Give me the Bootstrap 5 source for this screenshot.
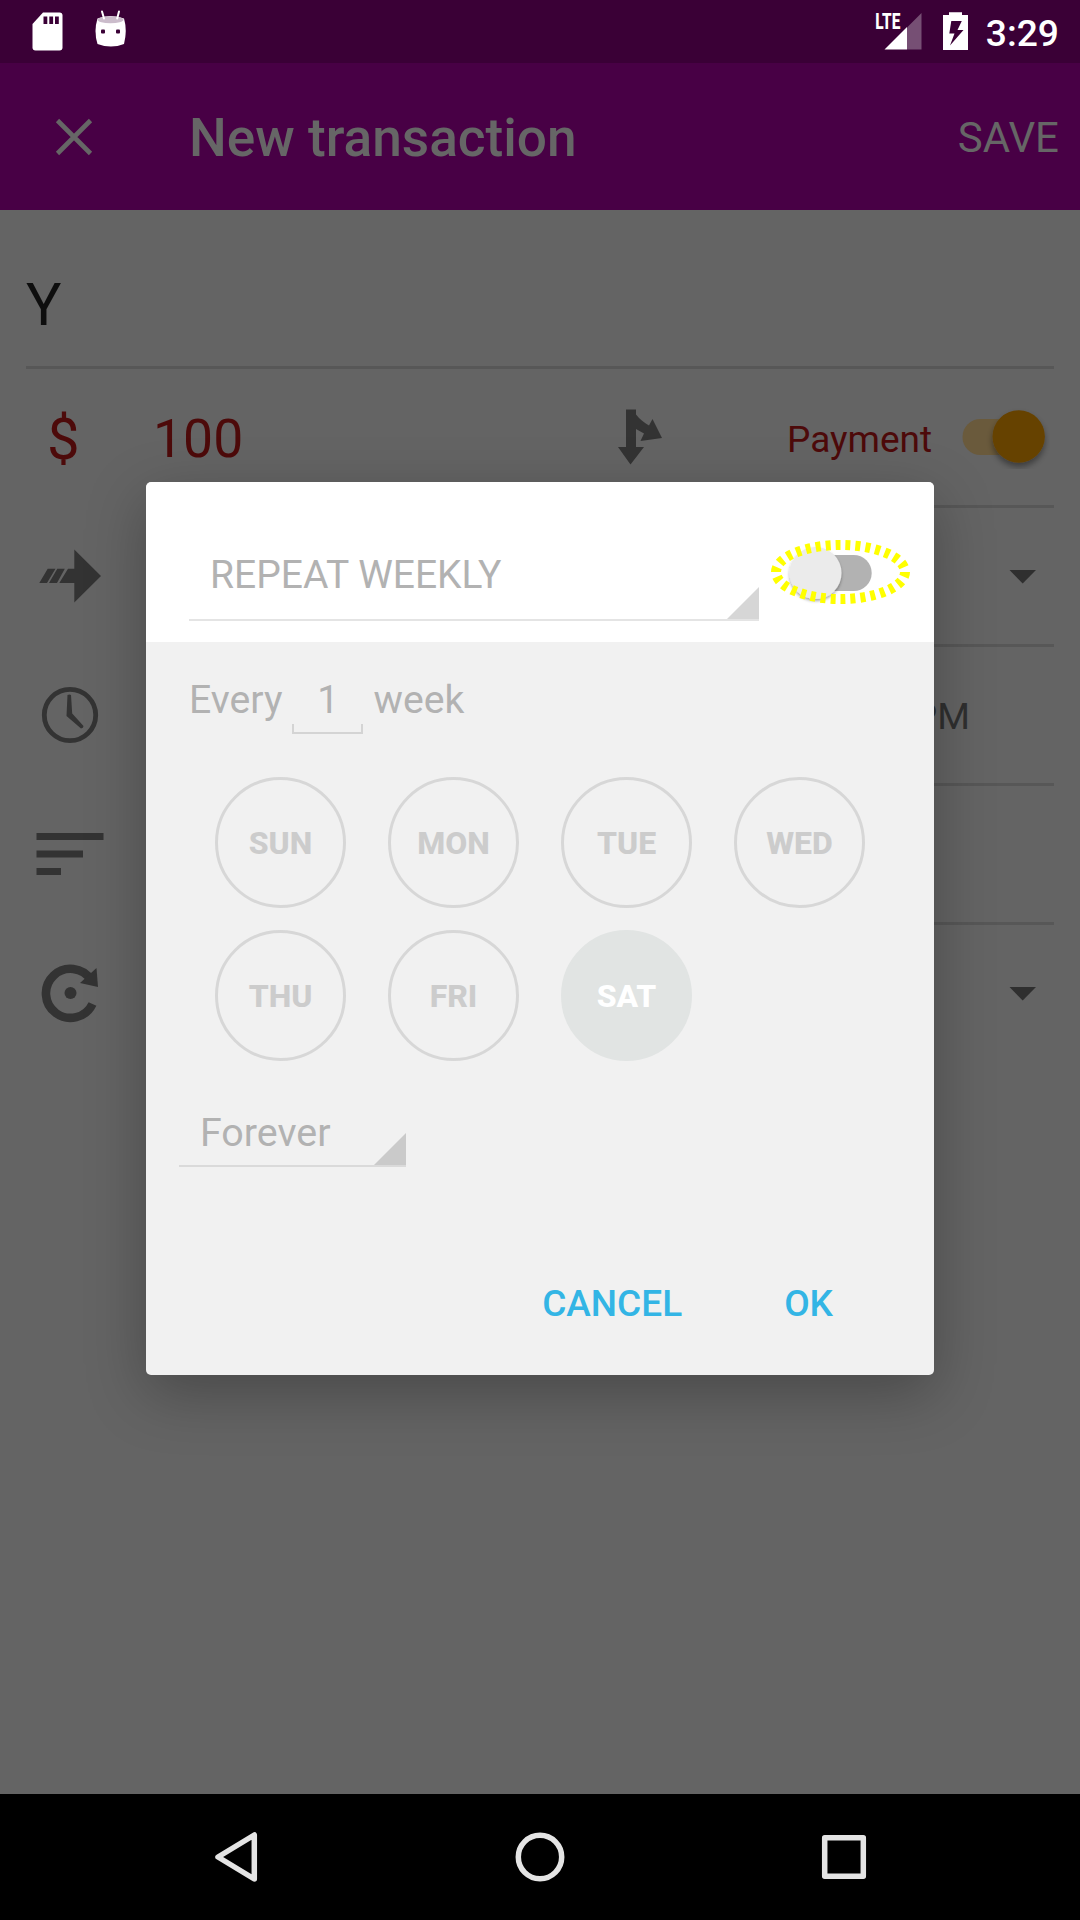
<!DOCTYPE html>
<html lang="en">
<head>
<meta charset="utf-8">
<meta name="viewport" content="width=device-width, initial-scale=1">
<title>New transaction</title>
<link href="https://cdn.jsdelivr.net/npm/bootstrap@5.3.0/dist/css/bootstrap.min.css" rel="stylesheet">
<style>
body{font-family:Roboto,"Liberation Sans",sans-serif;background:#646464;line-height:1;color:#2f2f2f}
svg{display:block;flex:none}
.screen{width:1080px;height:1920px}
.status{height:63px;background:#3a0036;padding-right:21px}
.status-right{margin-right:0}
.clock-text{font-size:37.2px;font-weight:500;line-height:46px;margin-left:6px;padding-top:10px}
.topbar{height:147px;background:#480045;color:#666;padding:4px 21px 0 55px}
.topbar h1{font-size:53.2px;font-weight:500;margin-left:96px;padding-top:1px}
.save{font-size:42px;padding-bottom:1px}
.form-area{padding:0 26px}
.field{height:139px;padding-bottom:3px;background:linear-gradient(#575757,#575757) 120px 100%/100% 3px no-repeat}
.field.name{height:159px;font-size:59px;color:#0e0e0e;padding-top:32px;background-position:0 100%}
.field.last{background:none}
.red{color:#4d0a0a}
.cur{font-size:58px;width:27px;margin-left:21px}
.amount{font-size:53.5px;margin-left:79px;width:464px}
.pay{font-size:37px;width:169px;margin-left:124px}
.pm{font-size:37.5px;margin-right:84px}
.ic-12{margin-left:12px}.ic-15{margin-left:15px}.ic-10{margin-left:10px}
.caret{margin-right:14px}
.navkeys{height:126px;background:#000}
.sheet{left:146px;top:482px;width:788px;height:893px;border-radius:5px;background:#f1f1f1;box-shadow:0 18px 60px rgba(0,0,0,.28)}
.sheet-head{height:160px;background:#fff;padding-left:43px}
.ink{color:#b2b2b2}
.spin{border-bottom:2px solid #e4e4e4;line-height:1}
.spin-lg{width:570px;height:65px;margin-top:74px;padding-left:21px;font-size:39px}
.spin-sm{width:227px;height:65px;margin:41px 0 0 33px;padding-left:21px;font-size:39.4px;border-color:#dadada}
.spin-sm span{padding-top:11px}
.tri{width:32px;height:32px;background:#d6d6d6;clip-path:polygon(100% 0,100% 100%,0 100%)}
.spin-sm .tri{background:#cacaca}
.toggle-off{margin:55px 0 0 10px}
.every{font-size:39.2px;padding:35px 0 0 43px;height:94px}
.count{width:71px;height:57px;margin:0 10px;font-size:38.5px}
.bracket{height:10px;border:2px solid #d4d4d4;border-top:0}
.days{padding:41px 0 0 69px;gap:22px 42px;width:762px}
.day{width:131px;height:131px;border:3px solid #d7d7d7;font-size:32px;font-weight:800;color:#ccc;padding-top:1px}
.day.on{background:#e1e4e3;border-color:#e1e4e3;color:#fff}
.acts{color:#33b5e5;font-size:37px;font-weight:500;padding:0 101px 0 0;margin-top:118px}
.acts span+span{margin-left:102px}
</style>
<script src="https://cdn.jsdelivr.net/npm/bootstrap@5.3.0/dist/js/bootstrap.bundle.min.js"></script>
</head>
<body>
<div class="screen position-relative overflow-hidden d-flex flex-column">
  <header class="status d-flex justify-content-between text-white">
    <svg width="140" height="63" fill="#fff">
      <path d="M43 12.5h16.500q3 0 3 3v32q0 3-3 3H35.500q-3 0-3-3V24z"/>
      <path fill="#3a0036" d="M43.500 16.500h3.800v7.500h-3.800zM49.300 16.500h3.800v7.500h-3.800zM55 16.500h3.800v7.500H55z"/>
      <path d="M97.500 18.500q13-5 26.500 0q3.500 12 0 25.500q-13 5-26.500 0q-4-13 0-25.500z"/>
      <ellipse cx="110.500" cy="19.700" rx="13" ry="3.500" fill="#cbbccb"/>
      <path d="M102 11.500l2 7M119 11.500l-1.800 7" stroke="#fff" stroke-width="2" stroke-linecap="round"/>
      <rect x="101" y="29.500" width="4" height="4" rx="1" fill="#3a0036"/><rect x="116" y="29.500" width="4" height="4" rx="1" fill="#3a0036"/>
    </svg>
    <div class="d-flex">
      <svg width="110" height="63" viewBox="870 0 110 63" fill="#fff">
        <path fill="#764f74" d="M907 27.500 921.500 13v36.500H907z"/><path d="M884.500 49.500 907 27v22.500z"/>
        <text x="875.300" y="29.300" font-family="Roboto" font-size="22" font-weight="800" textLength="25" lengthAdjust="spacingAndGlyphs">LTE</text>
        <path fill-rule="evenodd" d="M949 12.300h13V15h6v35h-25V15h6zM951.300 21l-2 12.500h5.200L950 45.500l13.500-15.500h-6l4.300-9z"/>
      </svg>
      <span class="clock-text">3:29</span>
    </div>
  </header>
  <div class="topbar d-flex align-items-center">
    <svg class="mb-1" width="38" height="38" stroke="#666" stroke-width="4.600"><path d="M2.500 2.500l33 33M35.500 2.500l-33 33"/></svg>
    <h1 class="mb-0">New transaction</h1>
    <span class="save ms-auto">SAVE</span>
  </div>
  <main class="form-area flex-grow-1">
    <div class="field name d-flex align-items-center">Y</div>
    <div class="field d-flex align-items-center pt-1 red">
      <span class="cur">$</span><span class="amount">100</span>
      <svg class="mb-1" width="46" height="56" viewBox="617 409 46 56" fill="#333"><path d="M626 409.500h10v5c4 5 8 8 13 11l3.500-6.500 9.500 19-21.500 3 3.500-7.500-8-4.500v18h8L630.500 464.500 618 447h8z"/></svg>
      <span class="pay">Payment</span>
      <svg class="mb-1" width="94" height="64" viewBox="956 405 94 64"><defs><filter id="sh" x="-30%" y="-30%" width="160%" height="160%"><feDropShadow dx="0" dy="4" stdDeviation="3" flood-opacity=".4"/></filter></defs><rect x="962.500" y="419" width="72" height="36" rx="18" fill="#6a5a3c"/><circle cx="1018.700" cy="436.500" r="26.200" fill="#664200" filter="url(#sh)"/></svg>
    </div>
    <div class="field d-flex align-items-center">
      <svg class="ic-12" width="64" height="54" viewBox="38 549 64 54" fill="#333"><path d="M47.700 568.700h7.800l-8.500 14.300h-7.700zM57.300 568.700h7.500L57 583h-8zM68 568.700h6.300V549.500L101 576 74.300 602.500V583H59.300z"/></svg>
      <svg class="ms-auto caret" width="32" height="16" fill="#2f2f2f"><path d="M1.500 2h26.500L14.700 15.500z"/></svg>
    </div>
    <div class="field d-flex align-items-center">
      <svg class="ic-15" width="58" height="58"><circle cx="29" cy="29" r="25.700" fill="none" stroke="#333" stroke-width="4.800"/><path fill="#333" d="M26.500 9q2-1 3.500 0l1.200 18.500L42.500 40q0 2-2.500 2.500L25.500 30z"/></svg>
      <span class="pm ms-auto pt-1 text-nowrap">PM</span>
    </div>
    <div class="field d-flex align-items-center">
      <svg class="ic-10" width="68" height="44" fill="#333"><path d="M.5 1H67.500v7H.5zM.5 18.500H47v7H.5zM.5 36H25v7H.5z"/></svg>
    </div>
    <div class="field last d-flex align-items-center">
      <svg class="ic-15" width="60" height="60" viewBox="41 963 60 60"><path d="M91 980A24.500 24.500 0 1 0 92.500 1004" fill="none" stroke="#333" stroke-width="8.600"/><path fill="#333" d="M96.500 968 98 987 80 983z"/><circle cx="70.500" cy="993" r="6" fill="#333"/></svg>
      <svg class="ms-auto caret" width="32" height="16" fill="#2f2f2f"><path d="M1.500 2h26.500L14.700 15.500z"/></svg>
    </div>
  </main>
  <footer class="navkeys">
    <svg width="1080" height="126" fill="none" stroke="#e4e4e4" stroke-width="5.500" stroke-linejoin="round"><path d="M218 63 254.300 41V85z"/><circle cx="540" cy="63" r="21.700"/><rect x="824.700" y="43.700" width="38.600" height="38.600"/></svg>
  </footer>

  <section class="sheet position-absolute overflow-visible d-flex flex-column" role="dialog">
    <div class="sheet-head d-flex rounded-top">
      <div class="spin spin-lg ink d-flex"><span>REPEAT WEEKLY</span><i class="tri ms-auto align-self-end"></i></div>
      <svg class="toggle-off" width="144" height="70" viewBox="769 537 144 70">
        <defs><filter id="sh2" x="-30%" y="-30%" width="160%" height="160%"><feDropShadow dx="0" dy="2" stdDeviation="1.500" flood-opacity=".35"/></filter></defs>
        <rect x="799" y="555" width="72.700" height="36" rx="18" fill="#b2b2b2"/><circle cx="815.500" cy="573" r="26" fill="#ebebeb" filter="url(#sh2)"/>
        <ellipse cx="840.500" cy="572" rx="64.500" ry="27" fill="none" stroke="#ff0" stroke-width="10" pathLength="300" stroke-dasharray="5 5"/>
      </svg>
    </div>
    <div class="every ink d-flex"><span class="pt-1">Every</span>
      <div class="count d-flex flex-column justify-content-between text-center"><span class="pt-1">1</span><div class="bracket"></div></div>
      <span class="pt-1">week</span></div>
    <div class="days d-flex flex-wrap">
      <div class="day rounded-circle d-flex align-items-center justify-content-center">SUN</div>
      <div class="day rounded-circle d-flex align-items-center justify-content-center">MON</div>
      <div class="day rounded-circle d-flex align-items-center justify-content-center">TUE</div>
      <div class="day rounded-circle d-flex align-items-center justify-content-center">WED</div>
      <div class="day rounded-circle d-flex align-items-center justify-content-center">THU</div>
      <div class="day rounded-circle d-flex align-items-center justify-content-center">FRI</div>
      <div class="day on rounded-circle d-flex align-items-center justify-content-center">SAT</div>
    </div>
    <div class="spin spin-sm ink d-flex"><span>Forever</span><i class="tri ms-auto align-self-end"></i></div>
    <div class="acts d-flex justify-content-end"><span>CANCEL</span><span>OK</span></div>
  </section>
</div>
</body>
</html>
